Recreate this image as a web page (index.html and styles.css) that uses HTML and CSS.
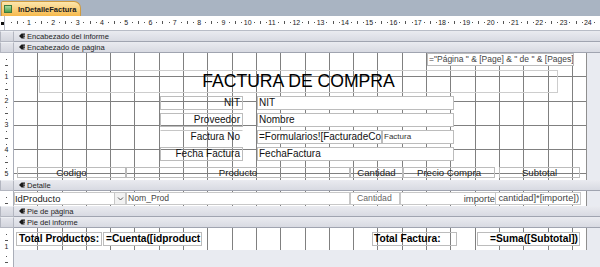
FILE: index.html
```html
<!DOCTYPE html>
<html lang="es">
<head>
  <meta charset="UTF-8">
  <title>InDetalleFactura</title>
  <link rel="stylesheet" href="styles.css">
</head>
<body>
  <div class="tabbar">
    <div class="tab"><span class="tab-icon"></span><span>InDetalleFactura</span></div>
  </div>

  <div class="ruler-row">
    <div class="corner"><span class="corner-mark"></span></div>
    <div class="hruler">
      <span>1</span><span>2</span><span>3</span><span>4</span><span>5</span><span>6</span>
      <span>7</span><span>8</span><span>9</span><span>10</span><span>11</span><span>12</span>
      <span>13</span><span>14</span><span>15</span><span>16</span><span>17</span><span>18</span>
      <span>19</span><span>20</span><span>21</span><span>22</span><span>23</span><span>24</span>
    </div>
  </div>

  <div class="bar-row">
    <div class="selector"></div>
    <div class="bar"><svg class="grip" viewBox="0 0 7 7"><path d="M0 3.5 L3 0.5 H7 V2 H5 V3 H7 V4.3 H5 V5.2 H6.5 V6.5 H3 Z"/></svg>Encabezado del informe</div>
  </div>
  <div class="bar-row">
    <div class="selector"></div>
    <div class="bar"><svg class="grip" viewBox="0 0 7 7"><path d="M0 3.5 L3 0.5 H7 V2 H5 V3 H7 V4.3 H5 V5.2 H6.5 V6.5 H3 Z"/></svg>Encabezado de página</div>
  </div>

  <!-- encabezado de pagina -->
  <div class="section page-header">
    <div class="vruler numbered"><span>1</span><span>2</span><span>3</span><span>4</span><span>5</span></div>
    <div class="canvas">
      <div class="ctl txt c-pages">="Página " &amp; [Page] &amp; " de " &amp; [Pages]</div>
      <div class="ctl lbl c-title">FACTURA DE COMPRA</div>

      <div class="ctl lbl c-label row1">NIT</div>
      <div class="ctl txt c-field row1">NIT</div>
      <div class="ctl lbl c-label row2">Proveedor</div>
      <div class="ctl txt c-field row2">Nombre</div>
      <div class="ctl lbl c-label row3 no-box">Factura No</div>
      <div class="ctl txt c-formula row3">=Formularios![FacturadeCo</div>
      <div class="ctl txt c-factura row3">Factura</div>
      <div class="ctl lbl c-label row4">Fecha Factura</div>
      <div class="ctl txt c-field row4">FechaFactura</div>

      <div class="ctl head h-codigo">Codigo</div>
      <div class="ctl head h-producto">Producto</div>
      <div class="ctl head h-cantidad">Cantidad</div>
      <div class="ctl head h-precio">Precio Compra</div>
      <div class="ctl head h-subtotal">Subtotal</div>
    </div>
    <div class="outside"></div>
  </div>

  <div class="bar-row">
    <div class="selector"></div>
    <div class="bar"><svg class="grip" viewBox="0 0 7 7"><path d="M0 3.5 L3 0.5 H7 V2 H5 V3 H7 V4.3 H5 V5.2 H6.5 V6.5 H3 Z"/></svg>Detalle</div>
  </div>

  <!-- detalle -->
  <div class="section detail">
    <div class="vruler"></div>
    <div class="canvas">
      <div class="ctl txt d-idprod">IdProducto<span class="combo-btn"><svg viewBox="0 0 9 9"><path d="M2 3.5 L4.5 6 L7 3.5"/></svg></span></div>
      <div class="ctl txt d-nomprod">Nom_Prod</div>
      <div class="ctl txt d-cant">Cantidad</div>
      <div class="ctl txt d-importe">importe</div>
      <div class="ctl txt d-subtot">cantidad]*[importe])</div>
    </div>
    <div class="outside"></div>
  </div>

  <div class="bar-row">
    <div class="selector"></div>
    <div class="bar"><svg class="grip" viewBox="0 0 7 7"><path d="M0 3.5 L3 0.5 H7 V2 H5 V3 H7 V4.3 H5 V5.2 H6.5 V6.5 H3 Z"/></svg>Pie de página</div>
  </div>
  <div class="bar-row">
    <div class="selector"></div>
    <div class="bar"><svg class="grip" viewBox="0 0 7 7"><path d="M0 3.5 L3 0.5 H7 V2 H5 V3 H7 V4.3 H5 V5.2 H6.5 V6.5 H3 Z"/></svg>Pie del informe</div>
  </div>

  <!-- pie del informe -->
  <div class="section report-footer">
    <div class="vruler footer-ruler"><span>1</span></div>
    <div class="canvas">
      <div class="ctl lbl f-totprod">Total Productos:</div>
      <div class="ctl txt f-cuenta">=Cuenta([idproduct</div>
      <div class="ctl lbl f-totfact">Total Factura:</div>
      <div class="ctl txt f-suma">=Suma([Subtotal])</div>
    </div>
    <div class="outside"></div>
  </div>

  <div class="section filler">
    <div class="vruler"></div>
    <div class="outside"></div>
  </div>
</body>
</html>
```

FILE: styles.css
```css
body {
  margin: 0;
  width: 600px;
  height: 267px;
  overflow: hidden;
  background: #e9ebf1;
  font-family: "Liberation Sans", Arial, sans-serif;
}

/* pestaña */
.tabbar {
  height: 16px;
  background: #a9b4c2;
  display: flex;
  align-items: flex-end;
  padding-left: 1px;
  box-sizing: border-box;
}

.tab {
  height: 14px;
  display: flex;
  align-items: center;
  gap: 6px;
  padding: 0 4px 0 2px;
  background: linear-gradient(#fde6ad, #f6b94c);
  border: 1px solid #cf9a3e;
  border-bottom: none;
  border-radius: 2px 7px 0 0;
  font-size: 7.5px;
  font-weight: bold;
  color: #1a1a1a;
}

.tab-icon {
  width: 8px;
  height: 8px;
  box-sizing: border-box;
  border: 1px solid #3d7a3d;
  background: linear-gradient(#a6dca0, #4e9f4e);
}

/* reglas */
.ruler-row {
  display: flex;
  height: 15px;
  box-sizing: border-box;
  border-bottom: 1px solid #b8bcc6;
  background: #fff;
}

.corner {
  width: 14px;
  box-sizing: border-box;
  border-right: 1px solid #b8bcc6;
  display: flex;
  align-items: center;
  justify-content: center;
}

.corner-mark {
  width: 3px;
  height: 3px;
  background: #111;
}

.hruler {
  flex: 1;
  display: flex;
  padding-left: 11.65px;
  font-size: 7px;
  line-height: 14px;
  color: #222;
  background-image:
    repeating-linear-gradient(to right, transparent 0 5.575px, #555 5.575px 6.575px, transparent 6.575px 12.15px),
    repeating-linear-gradient(to right, transparent 0 11.65px, #555 11.65px 12.65px, transparent 12.65px 24.3px);
  background-size: 100% 1px, 100% 3px;
  background-position: 0 6px, 0 5px;
  background-repeat: no-repeat;
}

.hruler span {
  flex: 0 0 24.3px;
  text-align: center;
}

.vruler {
  width: 14px;
  flex: none;
  box-sizing: border-box;
  border-right: 1px solid #a9adb8;
  background-color: #fff;
  background-image:
    repeating-linear-gradient(to bottom, transparent 0 5.575px, #555 5.575px 6.575px, transparent 6.575px 12.15px),
    repeating-linear-gradient(to bottom, transparent 0 11.65px, #555 11.65px 12.65px, transparent 12.65px 24.3px);
  background-size: 1px 100%, 3px 100%;
  background-position: 6px 0, 5px 0;
  background-repeat: no-repeat;
  font-size: 7px;
  color: #222;
}

.numbered {
  padding-top: 11.65px;
  box-sizing: border-box;
}

.vruler span {
  display: block;
  height: 24.3px;
  line-height: 24.3px;
  text-align: center;
}

.footer-ruler {
  padding-top: 13px;
}

.footer-ruler span {
  height: 12px;
  line-height: 12px;
  background: #fff;
}

/* barras de seccion */
.bar-row {
  display: flex;
  height: 11px;
}

.selector {
  width: 14px;
  flex: none;
  box-sizing: border-box;
  border: 1px solid #b3b6c0;
  border-top-color: #eef0f4;
  background: linear-gradient(#e4e5eb, #d3d5dd);
}

.bar {
  flex: 1;
  display: flex;
  align-items: center;
  gap: 2px;
  padding-left: 5px;
  box-sizing: border-box;
  background: linear-gradient(#eaebf0, #d8dae2);
  border-bottom: 1px solid #a0a4b0;
  font-size: 7.6px;
  color: #1e1e1e;
}

.grip {
  width: 6px;
  height: 6px;
  fill: #1a1a1a;
}

/* secciones */
.section {
  display: flex;
}

.page-header {
  height: 127px;
}

.detail {
  height: 15px;
}

.report-footer {
  height: 22px;
}

.filler {
  height: 17px;
}

.canvas {
  position: relative;
  flex: none;
  width: 573px;
  box-sizing: border-box;
  border-right: 1px solid #8f8f8f;
  background-color: #fff;
  background-image:
    repeating-linear-gradient(to right, transparent 0 23.3px, #808080 23.3px 24.3px),
    repeating-linear-gradient(to bottom, transparent 0 23.3px, #808080 23.3px 24.3px);
}

.outside {
  flex: 1;
  background: #e9ebf1;
}

/* controles */
.ctl {
  position: absolute;
  box-sizing: border-box;
  border: 1px solid #bcbcbc;
  white-space: nowrap;
  overflow: hidden;
  padding: 0 1px;
  font-size: 10px;
  line-height: 12px;
  height: 14px;
  color: #111;
}

.lbl {
  background: transparent;
  overflow: visible;
}

.txt {
  background: #fff;
}

.c-pages {
  left: 413px;
  top: 0;
  width: 147px;
  height: 13px;
  font-size: 8.5px;
  line-height: 11px;
  color: #444;
}

.c-title {
  left: 25px;
  top: 17px;
  width: 519px;
  height: 23px;
  font-size: 17.6px;
  line-height: 21px;
  text-align: center;
  border-color: #cdcdcd;
  color: #000;
}

.c-label {
  left: 146px;
  width: 83px;
  text-align: right;
  padding-right: 2px;
}

.no-box {
  border-color: #c6c6c6 transparent transparent transparent;
}

.c-field {
  left: 243px;
  width: 197px;
}

.c-formula {
  left: 243px;
  width: 125px;
}

.c-factura {
  left: 368px;
  width: 72px;
  font-size: 8px;
  color: #333;
}

.row1 { top: 43px; }
.row2 { top: 60px; }
.row3 { top: 77px; }
.row4 { top: 94px; }

.head {
  top: 114px;
  height: 11px;
  font-size: 9.6px;
  line-height: 10px;
  text-align: center;
  overflow: visible;
  background: transparent;
  color: #222;
}

.h-codigo { left: 3px; width: 109px; }
.h-producto { left: 112px; width: 224px; }
.h-cantidad { left: 336px; width: 53px; }
.h-precio { left: 389px; width: 92px; }
.h-subtotal { left: 485px; width: 81px; }

/* detalle */
.detail .ctl {
  top: 1px;
  height: 13px;
  line-height: 11px;
  border-color: #c8c8c8;
}

.d-idprod {
  left: 0;
  width: 112px;
  font-size: 9.4px;
  color: #1a1a1a;
  padding-left: 0;
}

.combo-btn {
  position: absolute;
  right: 0;
  top: 0;
  width: 11px;
  height: 11px;
  box-sizing: border-box;
  border-left: 1px solid #c8c8c8;
  background: #f2f2f2;
}

.combo-btn svg {
  display: block;
  width: 9px;
  height: 9px;
  margin: 1px 0 0 1px;
  fill: none;
  stroke: #555;
  stroke-width: 1;
}

.d-nomprod {
  left: 112px;
  width: 224px;
  font-size: 8.6px;
  color: #444;
}

.d-cant {
  left: 336px;
  width: 50px;
  font-size: 8.7px;
  color: #666;
  padding-left: 6px;
}

.d-importe {
  left: 386px;
  width: 96px;
  font-size: 9.4px;
  text-align: right;
  color: #444;
  padding-right: 0;
}

.d-subtot {
  left: 481px;
  width: 86px;
  font-size: 9.3px;
  text-align: right;
  color: #444;
}

/* pie del informe */
.report-footer .ctl {
  top: 4px;
  height: 14px;
  font-size: 10.2px;
  font-weight: bold;
  color: #000;
}

.f-totprod {
  left: 2px;
  width: 86px;
  padding-left: 2px;
}

.f-cuenta {
  left: 89px;
  width: 99px;
  padding-left: 2px;
}

.f-totfact {
  left: 358px;
  width: 85px;
}

.f-suma {
  left: 463px;
  width: 103px;
  text-align: right;
}
```
